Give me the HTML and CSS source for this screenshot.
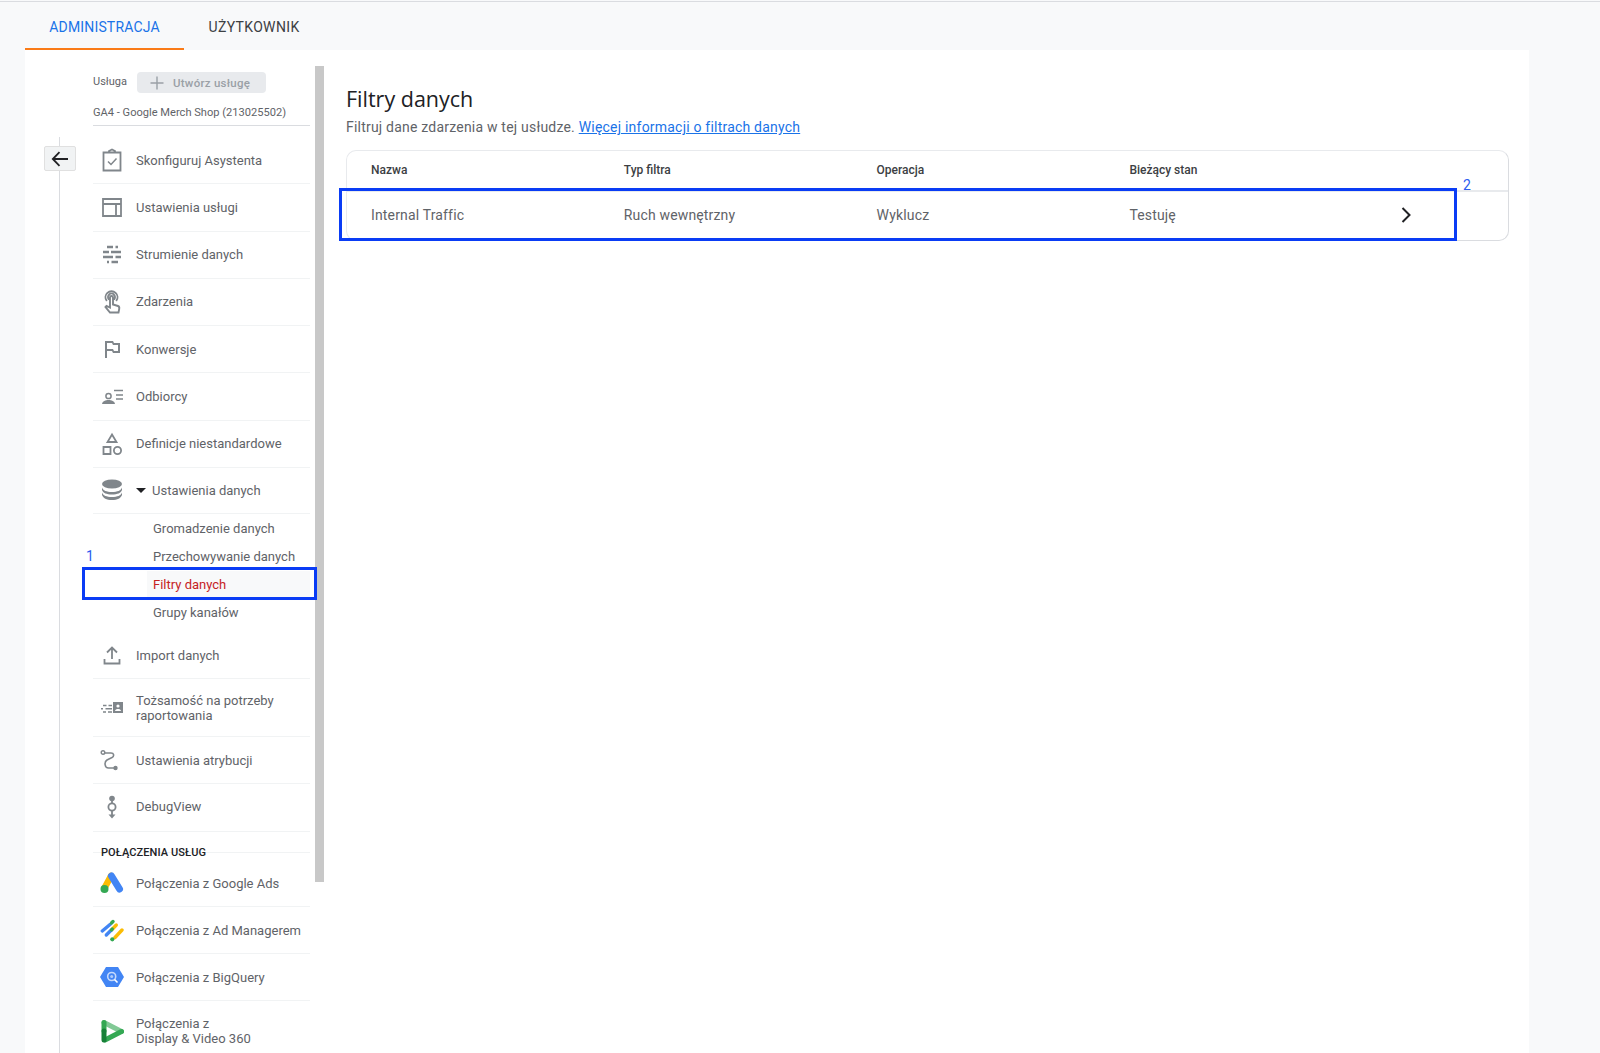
FILE: index.html
```html
<!DOCTYPE html>
<html lang="pl">
<head>
<meta charset="utf-8">
<title>Filtry danych</title>
<link rel="stylesheet" href="styles.css">
</head>
<body>
<div class="tabs">
  <div class="tab active">ADMINISTRACJA</div>
  <div class="tab">UŻYTKOWNIK</div>
</div>
<div class="panel">
  <div class="rail">
    <div class="rail-line"></div>
    <button class="back" aria-label="Wstecz">
      <svg width="24" height="24" viewBox="0 0 24 24"><path d="M20 12H5M11.5 5.2 4.8 12l6.7 6.8" fill="none" stroke="#202124" stroke-width="1.8"/></svg>
    </button>
  </div>
  <nav class="nav">
    <div class="prop-head">
      <span class="prop-label">Usługa</span>
      <span class="create"><svg width="16" height="16" viewBox="0 0 16 16"><path d="M8 1.5v13M1.500 8h13" stroke="#9aa0a6" stroke-width="1.400"/></svg><span>Utwórz usługę</span></span>
    </div>
    <div class="prop-name">GA4 - Google Merch Shop (213025502)</div>
    <ul class="list">
      <li class="item r1"><svg class="ic" viewBox="0 0 24 24"><path d="M3.500 4.500h17v18h-17zM9 4.500V3l3-1.500L15 3v1.500" fill="none" stroke="#80868b" stroke-width="1.800"/><path d="m8 13.500 3 3 5.500-6" fill="none" stroke="#80868b" stroke-width="1.500"/></svg><span>Skonfiguruj Asystenta</span></li>
      <li class="item"><svg class="ic" viewBox="0 0 24 24"><path d="M3 4h18v17H3zM3 9h18M16 9v12" fill="none" stroke="#80868b" stroke-width="1.800"/></svg><span>Ustawienia usługi</span></li>
      <li class="item"><svg class="ic" viewBox="0 0 24 24"><path d="M7 4h6M15.500 4h2.500M3 9h6M11 9h10M3 14h10M15.500 14h5.500M7 19h2M11.500 19h6.500" fill="none" stroke="#80868b" stroke-width="2.700"/></svg><span>Strumienie danych</span></li>
      <li class="item"><svg class="ic" viewBox="0 0 24 24"><path d="M9 9.500a3.500 3.500 0 1 1 5 0M6.800 11a6 6 0 1 1 9.400 0M10 7.500a1.500 1.500 0 0 1 3 0v7l5 1.500c1.500.5 1.500 1.500 1.200 3l-.7 3.500h-8.500L5.500 17l1-1 3.500 1.500z" fill="none" stroke="#80868b" stroke-width="1.900"/></svg><span>Zdarzenia</span></li>
      <li class="item"><svg class="ic" viewBox="0 0 24 24"><path d="M14 6l-1-2H5v17h2v-7h5l1 2h7V6h-6zm4 8h-4l-1-2H7V6h5l1 2h5v6z" fill="#80868b"/></svg><span>Konwersje</span></li>
      <li class="item"><svg class="ic" viewBox="0 0 24 24"><circle cx="8.500" cy="12" r="2.600" fill="none" stroke="#80868b" stroke-width="1.500"/><path d="M2 20c.5-3 3.500-4 6.500-4s6 1 6.500 4z" fill="#80868b"/><path d="M14 6.500h9M16 11h7M16 15h7" stroke="#80868b" stroke-width="1.500"/></svg><span>Odbiorcy</span></li>
      <li class="item"><svg class="ic" viewBox="0 0 24 24"><path d="M12 2.500 16.500 10h-9zM3.500 15h7v7h-7z" fill="none" stroke="#80868b" stroke-width="1.800"/><circle cx="17.500" cy="18.500" r="3.600" fill="none" stroke="#80868b" stroke-width="1.800"/></svg><span>Definicje niestandardowe</span></li>
      <li class="item r-data"><svg class="ic" viewBox="0 0 24 24"><ellipse cx="12" cy="6" rx="10" ry="4.500" fill="#80868b"/><path d="M2 9.500c1 3 4.500 4.500 10 4.500s9-1.500 10-4.500V12c-1 3-4.500 4.500-10 4.500S3 15 2 12zM2 14.500c1 3 4.500 4.500 10 4.500s9-1.500 10-4.500V17c-1 3-4.500 5-10 5S3 20 2 17z" fill="#80868b"/></svg><span class="caret"></span><span>Ustawienia danych</span></li>
    </ul>
    <ul class="sub">
      <li>Gromadzenie danych</li>
      <li>Przechowywanie danych</li>
      <li class="current">Filtry danych</li>
      <li>Grupy kanałów</li>
    </ul>
    <ul class="list">
      <li class="item r-import"><svg class="ic" viewBox="0 0 24 24"><path d="M12 16V5M7 9.500 12 4.500l5 5M4.500 16v4.500h15V16" fill="none" stroke="#80868b" stroke-width="1.800"/></svg><span>Import danych</span></li>
      <li class="item r-tall"><svg class="ic" viewBox="0 0 24 24"><path d="M3 9.500h3.500M8.500 9.500H12M1 12.700h2M5.500 12.700H12M3 16h3M8 16h4" stroke="#80868b" stroke-width="1.500" fill="none"/><path d="M13 6h10v11H13z" fill="#80868b"/><circle cx="18" cy="10" r="1.600" fill="#fff"/><path d="M15 15c.3-1.500 1.500-2 3-2s2.700.5 3 2z" fill="#fff"/></svg><span>Tożsamość na potrzeby<br>raportowania</span></li>
      <li class="item r-attr"><svg class="ic" viewBox="0 0 24 24"><circle cx="3" cy="4.500" r="1.800" fill="none" stroke="#80868b" stroke-width="1.400"/><circle cx="15.500" cy="20" r="2.200" fill="#80868b"/><path d="M5 5h6c3 0 3.500 3 1 4.500l-5 2.500c-3 2-2.500 8 1.500 8h7" fill="none" stroke="#80868b" stroke-width="1.600"/></svg><span>Ustawienia atrybucji</span></li>
      <li class="item r-debug"><svg class="ic" viewBox="0 0 24 24"><circle cx="12" cy="3.500" r="2.800" fill="#80868b"/><circle cx="12" cy="12" r="3.600" fill="none" stroke="#80868b" stroke-width="1.800"/><path d="M12 6v2.500M12 15.500v5" stroke="#80868b" stroke-width="1.800"/><path d="m8.500 19.500 3.500 4 3.500-4z" fill="#80868b"/></svg><span>DebugView</span></li>
    </ul>
    <div class="sect">POŁĄCZENIA USŁUG</div>
    <ul class="list">
      <li class="item r-ads"><svg class="ic" viewBox="0 0 24 24"><path d="M11 5 4.500 17" stroke="#fbbc04" stroke-width="6.500" stroke-linecap="round"/><path d="M11.500 5 19.500 18" stroke="#4285f4" stroke-width="7" stroke-linecap="round"/><circle cx="4.500" cy="18" r="4" fill="#34a853"/></svg><span>Połączenia z Google Ads</span></li>
      <li class="item"><svg class="ic" viewBox="0 0 24 24"><g fill="none" stroke-width="3.400" stroke-linecap="round"><path d="M2.300 13 10 6.500" stroke="#4285f4"/><path d="M11.500 5 13 3.500" stroke="#34a853"/><path d="M6.300 17 11.300 12" stroke="#4285f4"/><path d="M12.500 11 16.300 7" stroke="#fbbc04"/><path d="M11.500 12 12.300 11" stroke="#34a853"/><path d="M15 19.500 22 12" stroke="#fbbc04"/></g><circle cx="12.300" cy="21.300" r="2.100" fill="#34a853"/></svg><span>Połączenia z Ad Managerem</span></li>
      <li class="item r-bq"><svg class="ic" viewBox="0 0 24 24"><path d="M6 2h12l6 10-6 10H6L0 12z" fill="#4285f4"/><circle cx="11.700" cy="11.500" r="4" fill="none" stroke="#c6dafc" stroke-width="1.600"/><path d="M14.500 14.500 17.500 17.500" stroke="#fff" stroke-width="1.600"/><circle cx="11.700" cy="11.500" r="1.500" fill="#aecbfa"/></svg><span>Połączenia z BigQuery</span></li>
      <li class="item r-dv"><svg class="ic" viewBox="0 0 24 24"><path d="M4 3.500 21.500 12.500" stroke="#81c995" stroke-width="5" stroke-linecap="round"/><path d="M5 21 21.500 12.500" stroke="#34a853" stroke-width="5" stroke-linecap="round"/><path d="M4 3.500V12" stroke="#34a853" stroke-width="5" stroke-linecap="round"/><path d="M4 12V21" stroke="#188038" stroke-width="5" stroke-linecap="round"/></svg><span>Połączenia z<br>Display &amp; Video 360</span></li>
    </ul>
  </nav>
  <div class="scrollbar"></div>
  <main class="main">
    <h1>Filtry danych</h1>
    <p class="lead">Filtruj dane zdarzenia w tej usłudze. <a href="#">Więcej informacji o filtrach danych</a></p>
    <div class="card">
      <div class="row head"><span>Nazwa</span><span>Typ filtra</span><span>Operacja</span><span>Bieżący stan</span></div>
      <div class="row body-row"><span>Internal Traffic</span><span>Ruch wewnętrzny</span><span>Wyklucz</span><span>Testuję</span>
        <svg class="chev" width="24" height="24" viewBox="0 0 24 24"><path d="m8.500 5 7 7-7 7" fill="none" stroke="#202124" stroke-width="2"/></svg>
      </div>
    </div>
  </main>
</div>
<div class="mark mark-a"></div>
<div class="mark mark-b"></div>
<span class="num num-a">1</span>
<span class="num num-b">2</span>
</body>
</html>
```
FILE: styles.css
```css
* { box-sizing: border-box; }
html, body { margin: 0; padding: 0; }
body {
  position: relative;
  width: 1600px;
  height: 1053px;
  overflow: hidden;
  padding-top: 1px;
  background: #f8f9fa;
  font-family: Roboto, "Liberation Sans", sans-serif;
  color: #5f6368;
}
ul { list-style: none; margin: 0; padding: 0; }

.tabs { display: flex; height: 49px; padding-left: 25px; border-top: 1px solid #dadce0; }
.tab { width: 159px; height: 48px; line-height: 50px; text-align: center; font-size: 14px; letter-spacing: .16px; color: #3c4043; }
.tab + .tab { width: 140px; letter-spacing: .35px; }
.tab.active { color: #1a73e8; border-bottom: 2px solid #fa7b17; height: 48px; }

.panel { display: flex; width: 1504px; height: 1003px; margin-left: 25px; background: #fff; }

.rail { position: relative; flex: none; width: 68px; padding: 87px 0 0 34px; }
.rail-line { width: 1px; height: 100%; background: #dadce0; }
.back {
  position: absolute; left: 19px; top: 96px; width: 32px; height: 25px; padding: 0;
  display: flex; align-items: center; justify-content: center;
  background: #f1f3f4; border: 1px solid #e0e0e0; border-radius: 2px;
}

.nav { flex: none; width: 217px; padding-top: 22px; font-size: 13px; }
.prop-head { display: flex; align-items: center; height: 21px; gap: 10px; font-size: 11px; }
.prop-label { position: relative; top: -1px; }
.create {
  display: flex; align-items: center; gap: 8px; width: 129px; height: 21px; padding-left: 12px;
  background: #e8eaed; border-radius: 4px; color: #9aa0a6; font-size: 11.500px; font-weight: 500; letter-spacing: .25px;
}
.prop-name { height: 33px; border-bottom: 1px solid #dadce0; line-height: 39px; font-size: 11.100px; white-space: nowrap; }

.list:first-of-type { margin-top: 11px; }
.item {
  display: flex; align-items: center; gap: 12px; height: 47.250px; padding-left: 7px;
  border-bottom: 1px solid #f1f3f4; line-height: 15px; white-space: nowrap;
}
.ic { flex: none; width: 24px; height: 24px; }
.r-data { height: 46px; gap: 0; }
.r-data .ic { margin-right: 12px; }
.caret { width: 0; height: 0; margin-right: 6px; border: 5px solid transparent; border-top-color: #202124; border-bottom: 0; }
.r-import { padding-top: 1px; }
.r-tall { height: 58px; padding-top: 1px; }
.r-attr { height: 46.500px; padding-top: 1px; }
.r-debug { height: 48.500px; padding-bottom: 1px; }
.r-ads { height: 54px; padding-top: 7px; }
.r-bq { height: 47px; }
.r-dv { height: 60px; padding-top: 1px; }

.sub { padding: 1px 0 5px; }
.sub li { height: 28px; line-height: 28px; padding-left: 60px; white-space: nowrap; }
.sub .current { margin: 0 0 1px 54px; padding-left: 6px; color: #c5221f; background: #f8f9fa; height: 27px; line-height: 28px; }

.sect {
  height: 21px; border-bottom: 1px solid #f1f3f4; padding-left: 8px;
  font-size: 11px; font-weight: 500; line-height: 42px; color: #202124; letter-spacing: .1px;
}

.scrollbar { flex: none; width: 9px; height: 816px; margin: 16px 0 0 5px; background: #c8c8c8; }

.main { flex: none; width: 1163px; margin-left: 22px; padding-top: 35px; }
h1 { margin: 0; font-family: "Open Sans", Roboto, sans-serif; font-size: 21.500px; font-weight: 400; line-height: 28px; color: #202124; }
.lead { margin: 0; height: 37px; font-size: 14px; line-height: 28px; letter-spacing: .21px; }
.lead a { color: #1a73e8; }

.card { border: 1px solid #e8eaed; border-bottom-color: #dadce0; border-right-color: #dadce0; border-radius: 10px; height: 91px; }
.row { position: relative; display: grid; grid-template-columns: repeat(4, 252.800px); padding-left: 24px; align-items: center; }
.head { height: 41px; padding-bottom: 2px; border-bottom: 2px solid #e8eaed; font-size: 12px; font-weight: 500; color: #3c4043; }
.body-row { height: 48px; padding-bottom: 3px; font-size: 14px; letter-spacing: .16px; }
.chev { position: absolute; left: 1047px; top: 11px; }

.mark { position: absolute; border: 3px solid #0a3cf5; }
.mark-a { left: 82px; top: 567px; width: 235px; height: 33px; }
.mark-b { left: 339px; top: 188px; width: 1118px; height: 53px; }
.num { position: absolute; font-size: 14px; line-height: 16px; color: #2b5cf0; }
.num-a { left: 86px; top: 548px; }
.num-b { left: 1463px; top: 177px; }
```
